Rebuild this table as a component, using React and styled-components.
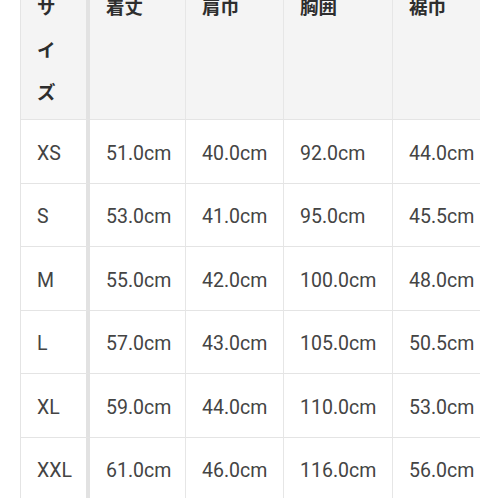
import React from 'react';
import styled, { createGlobalStyle } from 'styled-components';

const GlobalStyle = createGlobalStyle`
  html, body {
    margin: 0;
    padding: 0;
    background: #ffffff;
  }
  body {
    font-family: Roboto, 'Noto Sans CJK JP', sans-serif;
    color: #333333;
    overflow: hidden;
  }
`;

const Page = styled.div`
  width: 498px;
  height: 498px;
  padding-left: 20px;
  box-sizing: border-box;
  overflow: hidden;
`;

const Scroller = styled.div`
  width: 460px;
  margin-top: -33px;
  overflow: hidden;
`;

const Row = styled.div`
  display: flex;
  height: ${({ head }) => (head ? '153px' : '63.5px')};
  background: ${({ head }) => (head ? '#f4f4f4' : '#ffffff')};
`;

const Cell = styled.div`
  flex: 0 0 ${({ w }) => w}px;
  width: ${({ w }) => w}px;
  min-width: 0;
  box-sizing: border-box;
  padding: ${({ head }) => (head ? '18px 16px 0' : '5px 0 0 16px')};
  display: flex;
  align-items: ${({ head }) => (head ? 'flex-start' : 'center')};
  border-bottom: 1px solid #e4e4e4;
  border-right: ${({ sticky }) => (sticky ? '4px solid #e2e2e2' : '1px solid #e6e6e6')};
  border-left: ${({ sticky }) => (sticky ? '1px solid #e4e4e4' : 'none')};
  background: ${({ head }) => (head ? '#f4f4f4' : '#ffffff')};
  font-family: ${({ head }) => (head ? "'Noto Sans CJK JP', sans-serif" : "Roboto, sans-serif")};
  font-size: ${({ head }) => (head ? '18.5px' : '19.5px')};
  font-weight: ${({ head }) => (head ? 700 : 400)};
  line-height: ${({ head }) => (head ? '42.5px' : '24px')};
  color: ${({ head }) => (head ? '#2e2e2e' : '#444444')};
  white-space: ${({ head }) => (head ? 'normal' : 'nowrap')};
  word-break: break-all;
`;

const widths = [70, 96, 98, 109, 120];
const headers = ['サイズ', '着丈', '肩巾', '胸囲', '裾巾'];
const rows = [
  ['XS', '51.0cm', '40.0cm', '92.0cm', '44.0cm'],
  ['S', '53.0cm', '41.0cm', '95.0cm', '45.5cm'],
  ['M', '55.0cm', '42.0cm', '100.0cm', '48.0cm'],
  ['L', '57.0cm', '43.0cm', '105.0cm', '50.5cm'],
  ['XL', '59.0cm', '44.0cm', '110.0cm', '53.0cm'],
  ['XXL', '61.0cm', '46.0cm', '116.0cm', '56.0cm'],
];

const App = () => (
  <>
    <GlobalStyle />
    <Page>
      <Scroller>
        <Row head>
          {headers.map((h, i) => (
            <Cell key={h} head w={widths[i]} sticky={i === 0}>
              {h}
            </Cell>
          ))}
        </Row>
        {rows.map((r) => (
          <Row key={r[0]}>
            {r.map((v, i) => (
              <Cell key={i} w={widths[i]} sticky={i === 0}>
                {v}
              </Cell>
            ))}
          </Row>
        ))}
      </Scroller>
    </Page>
  </>
);

export default App;
